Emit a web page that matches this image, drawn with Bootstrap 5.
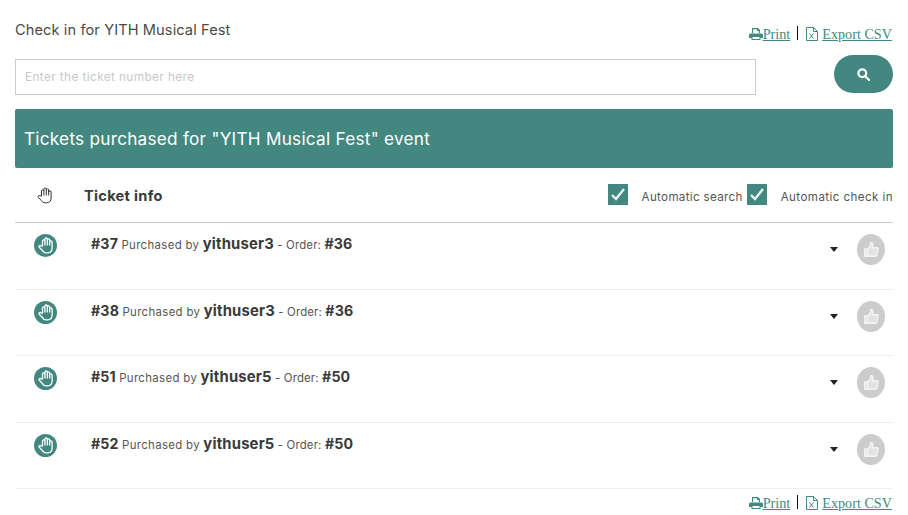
<!DOCTYPE html>
<html lang="en">
<head>
  <meta charset="UTF-8" />
  <title>Check in</title>
  <link href="https://cdn.jsdelivr.net/npm/bootstrap@5.3.3/dist/css/bootstrap.min.css" rel="stylesheet" />
  <style>
    body { font-family: Inter, "Liberation Sans", sans-serif; color: #3a3a3a; background: #fff; overflow: hidden; }
    .page-wrap { padding: 0 15px; height: 515px; }
    .top-row { height: 59px; }
    .page-title { font-size: 14.6px; line-height: 18px; padding-top: 21px; color: #4a4a4a; letter-spacing: .1px; }
    .tools { font-family: "Liberation Serif", serif; font-size: 14.2px; line-height: 16px; color: #222; padding-right: 1px; }
    .tools a { color: #3f8a82; text-decoration: underline; }
    .tools .sep { border-left: 1px solid #111; height: 14px; margin: 0 8px 0 7px; }
    .top-tools { padding-top: 26px; }
    .search-row { height: 50px; }
    .ticket-input { width: 741px; height: 36px; border: 1px solid #ccc; padding: 0 9px 0 9px; font-size: 11.8px; letter-spacing: .4px; color: #3a3a3a; outline: 0; }
    .ticket-input::placeholder { color: #c8c8c8; }
    .search-btn { width: 59px; height: 38px; margin-top: -4px; border-radius: 19px; background: #438880; border: 0; }
    .banner { height: 59px; background: #438880; color: #fff; font-size: 17.2px; letter-spacing: .25px; padding-left: 9px; border-radius: 2px; }
    .head-row { height: 55px; border-bottom: 1px solid #ccc; }
    .hand-col { width: 60px; }
    .head-title { font-size: 14.6px; font-weight: 700; letter-spacing: .3px; margin-left: 9px; padding-top: 3px; color: #3a3a3a; }
    .auto-opt { font-size: 11.6px; color: #555; letter-spacing: .33px; }
    .auto-opt .opt-label { padding-top: 5px; }
    .auto-opt .opt-label:last-child { letter-spacing: .42px; }
    .tick-box { width: 20px; height: 21px; background: #438880; margin-right: 14px; }
    .tick-box svg { display: block; }
    .ticket-row { height: 66.6px; border-bottom: 1px solid #eee; }
    .hand-badge { width: 23px; height: 23px; border-radius: 50%; background: #438880; margin: 11px 0 0 19px; }
    .ticket-text { margin: 11px 0 0 34px; font-size: 11.4px; line-height: 20px; color: #555; letter-spacing: .15px; }
    .ticket-text b { font-size: 14.2px; font-weight: 700; color: #3a3a3a; }
    .ticket-text .buyer-label { letter-spacing: .35px; }
    .ticket-text .buyer-name { font-size: 14.8px; letter-spacing: .2px; }
    .caret-mark { width: 0; height: 0; border-left: 4.5px solid transparent; border-right: 4.5px solid transparent; border-top: 5px solid #222; margin: 24px 19px 0 0; }
    .like-btn { width: 28px; height: 31px; border-radius: 50%; background: #ccc; margin: 11px 8px 0 0; }
    .bottom-tools { padding-top: 6px; }
  </style>
</head>
<body>
  <div class="page-wrap">
    <div class="top-row d-flex justify-content-between">
      <div class="page-title">Check in for YITH Musical Fest</div>
      <div class="tools top-tools d-flex align-items-start">
        <a href="#" class="d-inline-flex align-items-center"><svg width="14" height="12" viewBox="0 0 14 12"><path fill="#3f8a82" d="M3 0h6l2 2v3H9.800V3H8V1.200H4.200V5H3zM1.500 5.500h11A1.500 1.500 0 0 1 14 7v3h-2.500v2h-9v-2H0V7a1.500 1.500 0 0 1 1.500-1.500zM3.500 9v2h7V9z"/></svg>Print</a>
        <span class="sep"></span>
        <a href="#" class="d-inline-flex align-items-center"><svg class="me-1" width="12" height="14" viewBox="0 0 12 14" fill="none" stroke="#3f8a82"><path d="M.5.500h7l4 4v9H.5zM7.500.500v4h4"/><path d="M3.500 6.500l4 5M7.500 6.500l-4 5"/></svg>Export CSV</a>
      </div>
    </div>

    <div class="search-row d-flex justify-content-between">
      <input class="ticket-input" type="text" placeholder="Enter the ticket number here" />
      <button class="search-btn d-flex align-items-center justify-content-center" type="button" aria-label="Search">
        <svg width="13" height="13" viewBox="0 0 14 14" fill="none" stroke="#fff" stroke-width="2.400"><circle cx="5.700" cy="5.700" r="4.200"/><path d="M8.800 8.800L13 13" stroke-linecap="round"/></svg>
      </button>
    </div>

    <div class="banner d-flex align-items-center">Tickets purchased for "YITH Musical Fest" event</div>

    <div class="head-row d-flex align-items-center">
      <div class="hand-col d-flex justify-content-center">
        <svg width="16" height="17" viewBox="0 0 16 17" fill="#fff" stroke="#333" stroke-width="1" stroke-linejoin="round"><path d="M4.500 9V4a1.200 1.200 0 0 1 2.400 0V2.200a1.200 1.200 0 0 1 2.400 0V3a1.200 1.200 0 0 1 2.400 0V5a1.200 1.200 0 0 1 2.400 0v6c0 3-1.700 4.800-4.500 4.800H8c-1.600 0-2.600-.7-3.400-2L1.300 10.300c-.9-1.200.7-2.400 1.700-1.400zM6.900 4v4.500M9.300 3v5.500M11.700 4v4.500"/></svg>
      </div>
      <div class="head-title">Ticket info</div>
      <div class="ms-auto d-flex align-items-center auto-opt">
        <span class="tick-box"><svg width="20" height="21" viewBox="0 0 20 21" fill="none" stroke="#e8f3f1" stroke-width="2.400"><path d="M4 11l4 4 8-10"/></svg></span>
        <span class="opt-label me-1">Automatic search</span>
        <span class="tick-box"><svg width="20" height="21" viewBox="0 0 20 21" fill="none" stroke="#e8f3f1" stroke-width="2.400"><path d="M4 11l4 4 8-10"/></svg></span>
        <span class="opt-label">Automatic check in</span>
      </div>
    </div>

    <div id="ticketList"></div>

    <div class="tools bottom-tools d-flex justify-content-end align-items-start">
      <a href="#" class="d-inline-flex align-items-center"><svg width="14" height="12" viewBox="0 0 14 12"><path fill="#3f8a82" d="M3 0h6l2 2v3H9.800V3H8V1.200H4.200V5H3zM1.500 5.500h11A1.500 1.500 0 0 1 14 7v3h-2.500v2h-9v-2H0V7a1.500 1.500 0 0 1 1.500-1.500zM3.500 9v2h7V9z"/></svg>Print</a>
      <span class="sep"></span>
      <a href="#" class="d-inline-flex align-items-center"><svg class="me-1" width="12" height="14" viewBox="0 0 12 14" fill="none" stroke="#3f8a82"><path d="M.5.500h7l4 4v9H.5zM7.500.500v4h4"/><path d="M3.500 6.500l4 5M7.500 6.500l-4 5"/></svg>Export CSV</a>
    </div>
  </div>

  <script src="https://cdn.jsdelivr.net/npm/bootstrap@5.3.3/dist/js/bootstrap.bundle.min.js"></script>
  <script>
    const tickets = [
      ['#37', 'yithuser3', '#36'],
      ['#38', 'yithuser3', '#36'],
      ['#51', 'yithuser5', '#50'],
      ['#52', 'yithuser5', '#50']
    ];
    const list = document.getElementById('ticketList');

    // Build the ticket rows
    tickets.forEach(t => {
      list.insertAdjacentHTML('beforeend', `
        <div class="ticket-row d-flex align-items-start">
          <div class="hand-badge d-flex align-items-center justify-content-center">
            <svg width="16" height="17" viewBox="0 0 16 17" fill="#438880" stroke="#fff" stroke-width="1.300" stroke-linejoin="round"><path d="M4.500 9V4a1.200 1.200 0 0 1 2.400 0V2.200a1.200 1.200 0 0 1 2.400 0V3a1.200 1.200 0 0 1 2.400 0V5a1.200 1.200 0 0 1 2.400 0v6c0 3-1.700 4.800-4.500 4.800H8c-1.600 0-2.600-.7-3.400-2L1.300 10.300c-.9-1.200.7-2.400 1.700-1.400zM6.900 4v4.500M9.300 3v5.500M11.700 4v4.500"/></svg>
          </div>
          <div class="ticket-text"><b>${t[0]}</b> <span class="buyer-label">Purchased by</span> <b class="buyer-name">${t[1]}</b> - Order: <b>${t[2]}</b></div>
          <span class="caret-mark ms-auto"></span>
          <div class="like-btn d-flex align-items-center justify-content-center">
            <svg width="15" height="15" viewBox="0 0 14 14" fill="none" stroke="#f4f4f4" stroke-width="1.300" stroke-linejoin="round"><path d="M.7 6.500h2.600v6.800H.7zM3.300 6.500l2.800-3V1.200c0-.9 2.300-.9 2.300 1.300 0 1-.4 1.900-.8 2.800h4.600c.9 0 1.200.8.900 1.500l-1.200 5.600c-.2.600-.5.900-1.100.9H3.300z" fill="#f4f4f4" fill-opacity=".55"/></svg>
          </div>
        </div>`);
    });
  </script>
</body>
</html>
